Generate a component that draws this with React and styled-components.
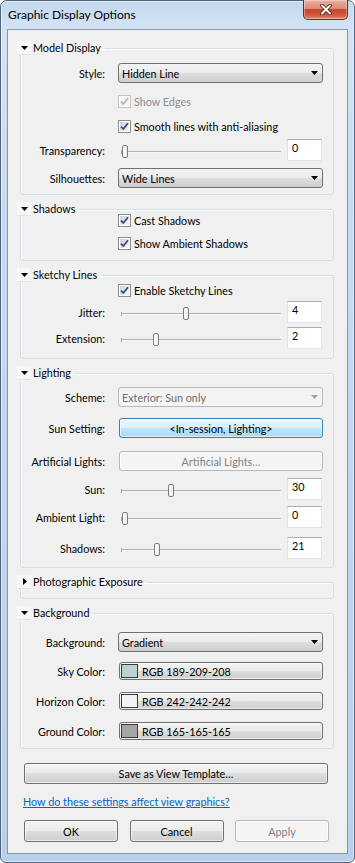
import React from 'react';
import styled, { createGlobalStyle, css } from 'styled-components';

const FONT = `Lato, "Open Sans", "Liberation Sans", sans-serif`;

const GlobalStyle = createGlobalStyle`
  html, body {
    margin: 0;
    padding: 0;
  }
  body {
    font-family: ${FONT};
    font-size: 10.8px;
    color: #000;
    background: #fff;
  }
  * {
    box-sizing: border-box;
  }
`;

const Window = styled.div`
  width: 355px;
  height: 863px;
  display: flex;
  flex-direction: column;
  padding: 0 6px 8px;
  border: 1px solid #52647a;
  border-radius: 7px 7px 6px 6px;
  background: linear-gradient(180deg, #c2d7ee 0%, #d3e3f4 3%, #c7dbf0 25%, #b9d0ea 100%);
  box-shadow: inset 0 0 0 1px rgba(255, 255, 255, 0.5);
`;

const TitleBar = styled.div`
  height: 28px;
  display: flex;
  align-items: flex-start;
`;

const Title = styled.div`
  padding: 7px 0 0 1px;
  font-size: 12px;
  line-height: 14px;
`;

const CloseButton = styled.div`
  margin-left: auto;
  margin-top: -1px;
  width: 45px;
  height: 20px;
  display: flex;
  align-items: center;
  justify-content: center;
  border: 1px solid #6b2b21;
  border-top: none;
  border-radius: 0 0 5px 5px;
  background: linear-gradient(180deg, #eab0a2 0%, #dd8b78 45%, #c9462f 50%, #d0553b 78%, #e08a70 100%);
  box-shadow: inset 0 0 0 1px rgba(255, 255, 255, 0.35);
`;

const Client = styled.div`
  flex: 1;
  display: flex;
  flex-direction: column;
  border: 1px solid #8296ad;
  background: #f0f0f0;
  padding: 11px 13px 0 12px;
`;

const Groups = styled.div`
  display: flex;
  flex-direction: column;
  gap: 7px;
`;

const Group = styled.fieldset`
  margin: 0;
  min-width: 0;
  padding: 0 10px ${p => p.$pb}px 0;
  border: 1px solid #d5dfe5;
  border-radius: 3px;
  box-shadow: inset 1px 1px 0 #fff;
`;

const Legend = styled.legend`
  height: 14px;
  padding: 0 4px 0 0;
  margin-left: -4px;
`;

const LegendInner = styled.span`
  display: flex;
  align-items: center;
  gap: 2px;
  height: 14px;
  line-height: 14px;
`;

const Toggle = styled.span`
  width: 14px;
  height: 14px;
  display: flex;
  align-items: center;
  justify-content: center;
  background: #f7f7f7;
  border-left: 1px solid #fff;
  border-bottom: 1px solid #dde3e8;
`;

const Row = styled.div`
  display: flex;
  align-items: center;
  height: ${p => p.$h}px;
  margin-top: ${p => p.$mt}px;
`;

const Label = styled.span`
  width: 84px;
  margin-right: 13px;
  flex-shrink: 0;
  text-align: right;
  white-space: nowrap;
`;

const Combo = styled.div`
  width: 206px;
  height: 20px;
  display: flex;
  align-items: center;
  justify-content: space-between;
  padding: 0 4px 0 3px;
  border: 1px solid ${p => (p.$disabled ? '#b5b9bc' : '#707070')};
  border-radius: 3px;
  color: ${p => (p.$disabled ? '#6d6d6d' : '#000')};
  background: ${p =>
    p.$disabled
      ? '#f4f4f4'
      : 'linear-gradient(180deg, #f3f3f3 0%, #ebebeb 50%, #dddddd 50%, #cfcfcf 100%)'};
`;

const tones = {
  normal: css`
    border-color: #707070;
    background: linear-gradient(180deg, #f3f3f3 0%, #ebebeb 50%, #dddddd 50%, #cfcfcf 100%);
    color: #000;
  `,
  hot: css`
    border-color: #3c7fb1;
    background: linear-gradient(180deg, #eaf6fd 0%, #d9f0fc 50%, #bee6fd 50%, #a7d9f5 100%);
    color: #000;
  `,
  disabled: css`
    border-color: #b5b9bc;
    background: #f4f4f4;
    color: #838383;
  `,
};

const Button = styled.div`
  width: ${p => p.$w}px;
  height: ${p => p.$h}px;
  flex-shrink: 0;
  display: flex;
  align-items: center;
  justify-content: ${p => (p.$start ? 'flex-start' : 'center')};
  border: 1px solid;
  border-radius: 3px;
  box-shadow: inset 0 0 0 1px rgba(255, 255, 255, 0.6);
  white-space: nowrap;
  ${p => tones[p.$tone || 'normal']}
`;

const FieldButton = styled(Button)`
  margin-left: 1px;
`;

const Swatch = styled.span`
  width: 17px;
  height: 14px;
  margin: 0 4px 0 1px;
  border: 1px solid #3a3a3a;
  background: ${p => p.$color};
`;

const TextBox = styled.div`
  width: 35px;
  height: 22px;
  margin-left: 3px;
  padding: 1px 0 0 4px;
  line-height: 14px;
  background: #fff;
  border: 1px solid #e2e3ea;
  border-top-color: #abadb3;
`;

const SliderBox = styled.div`
  position: relative;
  width: 166px;
  height: 22px;
  flex-shrink: 0;
`;

const Track = styled.div`
  position: absolute;
  left: 3px;
  right: 3px;
  top: 12px;
  height: 2px;
  border-top: 1px solid #b2b2b2;
  background: #f7f7f7;

  &::before {
    content: '';
    position: absolute;
    left: 0;
    top: -2px;
    width: 1px;
    height: 4px;
    background: #a6a6a6;
  }
`;

const Thumb = styled.div`
  position: absolute;
  top: 6px;
  width: 6px;
  height: 13px;
  border: 1px solid #7c7c7c;
  border-radius: 2px;
  background: linear-gradient(90deg, #fdfdfd 0%, #ececec 100%);
`;

const CheckText = styled.span`
  margin-left: 3px;
  white-space: nowrap;
  color: ${p => (p.$disabled ? '#8d8d8d' : '#000')};
`;

const Footer = styled.div`
  display: flex;
  flex-direction: column;
  padding: 0 5px 0 4px;
`;

const WideButton = styled(Button)`
  margin-top: 14px;
`;

const HelpLink = styled.a`
  align-self: flex-start;
  margin: 11px 0 0 -1px;
  line-height: 14px;
  color: #0066cc;
  text-decoration: underline;
  cursor: pointer;
`;

const ButtonBar = styled.div`
  display: flex;
  justify-content: space-between;
  margin-top: 11px;
`;

const Arrow = ({ dir = 'down', color = '#000' }) =>
  dir === 'down' ? (
    <svg width="7" height="4" viewBox="0 0 7 4">
      <path d="M0 0H7L3.5 4Z" fill={color} />
    </svg>
  ) : (
    <svg width="4" height="7" viewBox="0 0 4 7">
      <path d="M0 0V7L4 3.5Z" fill={color} />
    </svg>
  );

const CloseGlyph = () => (
  <svg width="12" height="11" viewBox="0 0 12 11">
    <path d="M2 1.5L10 9.5M10 1.5L2 9.5" stroke="#4a1a14" strokeWidth="3.6" strokeLinecap="round" />
    <path d="M2 1.5L10 9.5M10 1.5L2 9.5" stroke="#fff" strokeWidth="2" strokeLinecap="round" />
  </svg>
);

const CheckBox = ({ disabled }) => (
  <svg width="13" height="13" viewBox="0 0 13 13">
    <defs>
      <linearGradient id="cbFill" x1="0" y1="0" x2="1" y2="1">
        <stop offset="0" stopColor="#cdd1d6" />
        <stop offset="1" stopColor="#f7f7f7" />
      </linearGradient>
    </defs>
    <rect x="0.5" y="0.5" width="12" height="12" fill="#fff" stroke={disabled ? '#c4c4c4' : '#8e8f8f'} />
    <rect x="2" y="2" width="9" height="9" fill={disabled ? '#f4f4f4' : 'url(#cbFill)'} />
    <path
      d="M3 6.6L5.3 9L10 3.2"
      fill="none"
      stroke={disabled ? '#b6b6b6' : '#2f4a86'}
      strokeWidth="1.8"
    />
  </svg>
);

const Section = ({ title, open = true, pb, children }) => (
  <Group $pb={pb}>
    <Legend>
      <LegendInner>
        <Toggle>
          <Arrow dir={open ? 'down' : 'right'} />
        </Toggle>
        {title}
      </LegendInner>
    </Legend>
    {children}
  </Group>
);

const ComboRow = ({ label, value, disabled, mt }) => (
  <Row $h={20} $mt={mt}>
    <Label>{label}</Label>
    <Combo $disabled={disabled}>
      <span>{value}</span>
      <Arrow color={disabled ? '#a3a3a3' : '#000'} />
    </Combo>
  </Row>
);

const CheckRow = ({ text, disabled, mt, h = 13 }) => (
  <Row $h={h} $mt={mt}>
    <Label />
    <CheckBox disabled={disabled} />
    <CheckText $disabled={disabled}>{text}</CheckText>
  </Row>
);

const SliderRow = ({ label, value, max, mt }) => (
  <Row $h={22} $mt={mt}>
    <Label>{label}</Label>
    <SliderBox>
      <Track />
      <Thumb style={{ left: 4 + Math.round((value / max) * 153) }} />
    </SliderBox>
    <TextBox>{value}</TextBox>
  </Row>
);

const ButtonRow = ({ label, text, tone, mt }) => (
  <Row $h={20} $mt={mt}>
    <Label>{label}</Label>
    <FieldButton $w={204} $h={20} $tone={tone}>
      {text}
    </FieldButton>
  </Row>
);

const ColorRow = ({ label, color, rgb, mt }) => (
  <Row $h={18} $mt={mt}>
    <Label>{label}</Label>
    <FieldButton $w={204} $h={18} $start>
      <Swatch $color={color} />
      RGB {rgb}
    </FieldButton>
  </Row>
);

export default function App() {
  return (
    <>
      <GlobalStyle />
      <Window>
        <TitleBar>
          <Title>Graphic Display Options</Title>
          <CloseButton>
            <CloseGlyph />
          </CloseButton>
        </TitleBar>
        <Client>
          <Groups>
            <Section title="Model Display" pb={6}>
              <ComboRow label="Style:" value="Hidden Line" mt={8} />
              <CheckRow text="Show Edges" disabled mt={8} h={20} />
              <CheckRow text="Smooth lines with anti-aliasing" mt={5} h={20} />
              <SliderRow label="Transparency:" value={0} max={100} mt={3} />
              <ComboRow label="Silhouettes:" value="Wide Lines" mt={7} />
            </Section>

            <Section title="Shadows" pb={10}>
              <CheckRow text="Cast Shadows" mt={-2} />
              <CheckRow text="Show Ambient Shadows" mt={10} />
            </Section>

            <Section title="Sketchy Lines" pb={9}>
              <CheckRow text="Enable Sketchy Lines" mt={2} />
              <SliderRow label="Jitter:" value={4} max={10} mt={4} />
              <SliderRow label="Extension:" value={2} max={10} mt={4} />
            </Section>

            <Section title="Lighting" pb={8}>
              <ComboRow label="Scheme:" value="Exterior: Sun only" disabled mt={7} />
              <ButtonRow label="Sun Setting:" text="<In-session, Lighting>" tone="hot" mt={11} />
              <ButtonRow label="Artificial Lights:" text="Artificial Lights…" tone="disabled" mt={13} />
              <SliderRow label="Sun:" value={30} max={100} mt={7} />
              <SliderRow label="Ambient Light:" value={0} max={100} mt={6} />
              <SliderRow label="Shadows:" value={21} max={100} mt={9} />
            </Section>

            <Section title="Photographic Exposure" open={false} pb={9} />

            <Section title="Background" pb={8}>
              <ComboRow label="Background:" value="Gradient" mt={12} />
              <ColorRow label="Sky Color:" color="rgb(189,209,208)" rgb="189-209-208" mt={10} />
              <ColorRow label="Horizon Color:" color="rgb(242,242,242)" rgb="242-242-242" mt={12} />
              <ColorRow label="Ground Color:" color="rgb(165,165,165)" rgb="165-165-165" mt={12} />
            </Section>
          </Groups>

          <Footer>
            <WideButton $w={304} $h={21}>
              Save as View Template…
            </WideButton>
            <HelpLink>How do these settings affect view graphics?</HelpLink>
            <ButtonBar>
              <Button $w={94} $h={22}>OK</Button>
              <Button $w={94} $h={22}>Cancel</Button>
              <Button $w={94} $h={22} $tone="disabled">Apply</Button>
            </ButtonBar>
          </Footer>
        </Client>
      </Window>
    </>
  );
}
